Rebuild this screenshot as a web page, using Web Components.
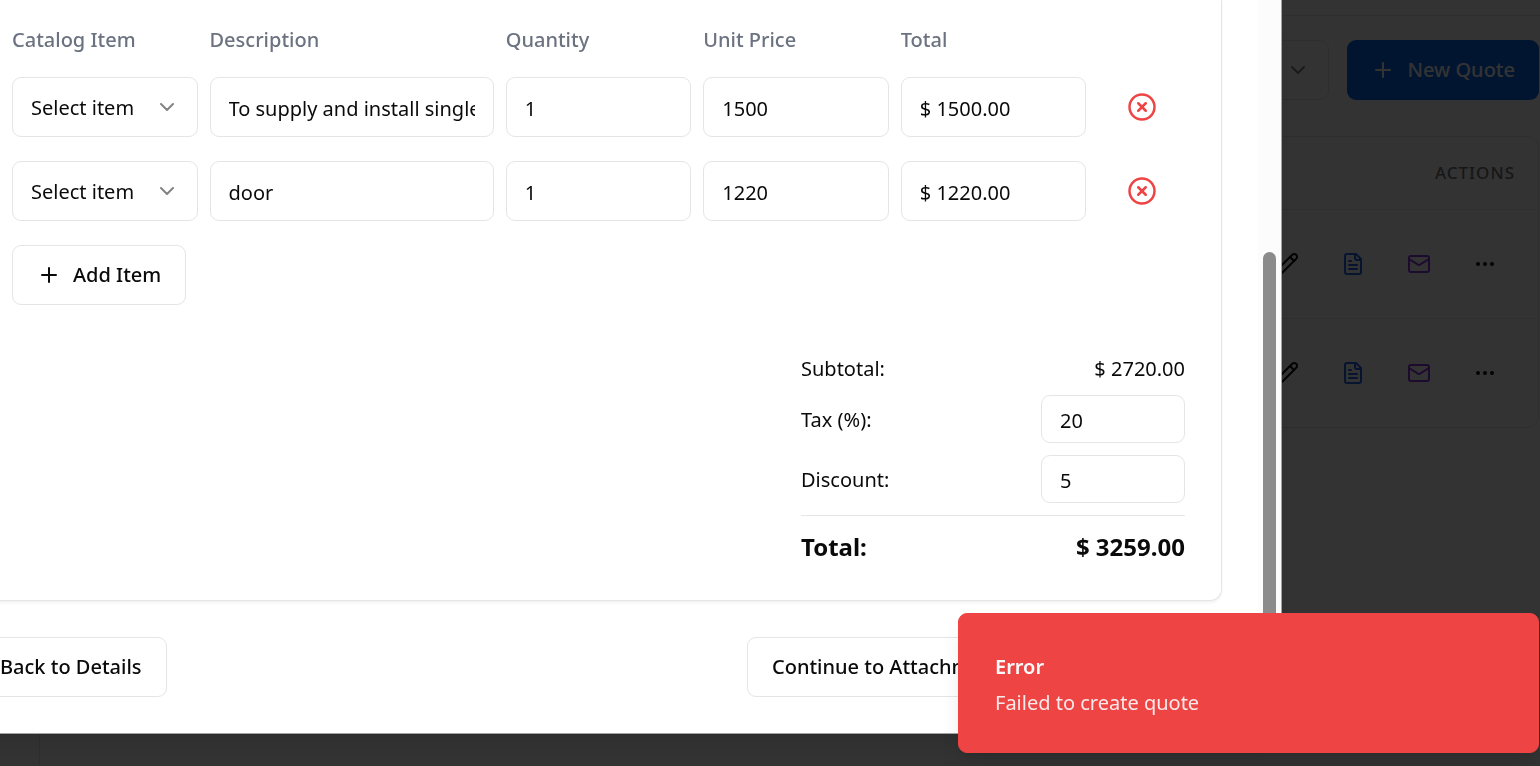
<!DOCTYPE html>
<html lang="en">
<head>
<meta charset="utf-8">
<meta name="viewport" content="width=device-width, initial-scale=1">
<title>Quotes</title>
<style>
  html, body { margin: 0; height: 100%; overflow: hidden; }
  body {
    --line: #e5e5e5;
    --ink: #0a0a0a;
    --muted: #6b7280;
    background: #fcfcfc;
    color: var(--ink);
    font: 400 20px/30px "Noto Sans", "Open Sans", sans-serif;
  }
</style>
</head>
<body>
<quotes-page></quotes-page>
<modal-backdrop></modal-backdrop>
<quote-dialog>
  <form-card>
    <line-items></line-items>
    <quote-totals></quote-totals>
  </form-card>
  <dialog-footer slot="footer"></dialog-footer>
</quote-dialog>
<toast-message>
  <span slot="title">Error</span>
  <span slot="description">Failed to create quote</span>
</toast-message>

<script>
const ICONS = {
  plus: '<path d="M5 12h14"/><path d="M12 5v14"/>',
  chevron: '<path d="m6 9 6 6 6-6"/>',
  remove: '<circle cx="12" cy="12" r="10"/><path d="m15 9-6 6"/><path d="m9 9 6 6"/>',
  pencil: '<path d="M17 3a2.85 2.83 0 1 1 4 4L7.5 20.5 2 22l1.5-5.5Z"/><path d="m15 5 4 4"/>',
  file: '<path d="M15 2H6a2 2 0 0 0-2 2v16a2 2 0 0 0 2 2h12a2 2 0 0 0 2-2V7Z"/><path d="M14 2v4a2 2 0 0 0 2 2h4"/><path d="M10 9H8"/><path d="M16 13H8"/><path d="M16 17H8"/>',
  mail: '<rect width="20" height="16" x="2" y="4" rx="2"/><path d="m22 7-8.97 5.7a1.94 1.94 0 0 1-2.06 0L2 7"/>',
  dots: '<circle cx="12" cy="12" r="1"/><circle cx="19" cy="12" r="1"/><circle cx="5" cy="12" r="1"/>'
};

class ShadowElement extends HTMLElement {
  constructor() {
    super();
    this.attachShadow({ mode: 'open' });
  }
  connectedCallback() {
    const t = document.createElement('template');
    t.innerHTML = `<style>*,*::before{box-sizing:border-box}${this.css()}</style>${this.html()}`;
    this.shadowRoot.replaceChildren(t.content.cloneNode(true));
  }
  css() { return ''; }
  html() { return '<slot></slot>'; }
}

class UiIcon extends ShadowElement {
  css() {
    return `:host{display:block;width:24px;height:24px;flex:none}
      :host([size="lg"]){width:30px;height:30px}
      svg{display:block;width:100%;height:100%}`;
  }
  html() {
    return `<svg viewBox="0 0 24 24" fill="none" stroke="currentColor" stroke-width="2" stroke-linecap="round" stroke-linejoin="round" aria-hidden="true">${ICONS[this.getAttribute('name')]}</svg>`;
  }
}

class UiButton extends ShadowElement {
  css() {
    return `:host{display:block}
      button{display:flex;align-items:center;justify-content:center;gap:12px;width:100%;height:60px;margin:0;padding:0 24px;
        border:1px solid var(--line);border-radius:9px;background:#fff;color:inherit;font:inherit;font-weight:500;white-space:nowrap}
      :host([variant="primary"]) button{border:0;background:#0769f5;color:#fff}
      :host([variant="ghost"]) button{padding:0;border:0;background:none}`;
  }
  html() {
    const label = this.getAttribute('label');
    return `<button type="button"${label ? ` aria-label="${label}"` : ''}><slot></slot></button>`;
  }
}

class QuotesPage extends ShadowElement {
  css() {
    return `:host{display:grid;grid-template-columns:40px 1fr;min-height:100vh}
      aside{border-right:1px solid var(--line)}
      header{height:16px;border-bottom:1px solid var(--line)}
      main{display:grid;gap:36px;padding:24px 1px 24px 36px}
      .toolbar{display:flex;justify-content:flex-end;gap:18px}
      .filter{display:grid;align-items:center;width:270px}
      .filter > *{grid-area:1/1}
      select{appearance:none;width:100%;height:60px;padding:0 18px;border:1px solid var(--line);border-radius:9px;background:#fff;color:inherit;font:inherit}
      .filter ui-icon{justify-self:end;margin-right:19px;opacity:.5;pointer-events:none}`;
  }
  html() {
    return `<aside></aside>
      <div>
        <header></header>
        <main>
          <div class="toolbar">
            <div class="filter"><select aria-label="Status filter"></select><ui-icon name="chevron"></ui-icon></div>
            <ui-button variant="primary"><ui-icon name="plus"></ui-icon>New Quote</ui-button>
          </div>
          <quotes-table></quotes-table>
        </main>
      </div>`;
  }
}

class QuotesTable extends ShadowElement {
  css() {
    return `:host{display:block;border:1px solid var(--line);border-radius:12px;background:#fff;overflow:hidden}
      table{width:100%;border-collapse:collapse}
      th{height:72px;padding:0 23px;border-bottom:1px solid var(--line);color:#737373;font-size:17px;font-weight:500;letter-spacing:1px;text-align:right}
      td{height:109px;padding:0 23px;border-bottom:1px solid var(--line)}
      tr:last-child td{border-bottom:0}
      .actions{display:flex;justify-content:flex-end;gap:6px}
      ui-button{width:60px}
      .pdf{color:#2563eb}
      .mail{color:#9333ea}`;
  }
  html() {
    const row = `<tr><td><div class="actions">
      <ui-button variant="ghost" label="Edit"><ui-icon name="pencil"></ui-icon></ui-button>
      <ui-button variant="ghost" label="PDF" class="pdf"><ui-icon name="file"></ui-icon></ui-button>
      <ui-button variant="ghost" label="Email" class="mail"><ui-icon name="mail"></ui-icon></ui-button>
      <ui-button variant="ghost" label="More"><ui-icon name="dots"></ui-icon></ui-button>
    </div></td></tr>`;
    return `<table><thead><tr><th scope="col">ACTIONS</th></tr></thead><tbody>${row}${row}</tbody></table>`;
  }
}

class ModalBackdrop extends ShadowElement {
  css() { return ':host{position:fixed;inset:0;background:rgba(0,0,0,.8)}'; }
}

/* The dialog runs past the left and top window edges, scrolled to its end. */
class QuoteDialog extends ShadowElement {
  css() {
    return `:host{position:fixed;top:-1px;left:-62px;right:258px;display:flex;border:1px solid #a3a3a3;background:#fff;
        box-shadow:0 15px 23px -5px rgba(0,0,0,.1),0 6px 9px -6px rgba(0,0,0,.1)}
      .content{flex:1;display:grid;gap:36px;padding:0 36px 36px}
      .track{display:flex;justify-content:center;width:23px;padding-top:252px;background:#fcfcfc}
      .thumb{width:13px;border-radius:7px;background:#8b8b8b}`;
  }
  html() {
    return `<div class="content"><slot></slot><slot name="footer"></slot></div>
      <div class="track"><div class="thumb"></div></div>`;
  }
}

class FormCard extends ShadowElement {
  css() {
    return `:host{display:grid;gap:48px;padding:27px 36px 36px;border:1px solid var(--line);border-top:0;border-radius:0 0 12px 12px;
        background:#fff;box-shadow:0 2px 3px rgba(0,0,0,.05)}`;
  }
}

class LineItems extends ShadowElement {
  css() {
    return `:host{display:grid;gap:24px}
      .row{display:grid;grid-template-columns:repeat(12,1fr);gap:12px;align-items:center}
      .row > *{grid-column:span 2;min-width:0}
      .row > .wide{grid-column:span 3}
      .row > .slim{grid-column:span 1}
      .head{color:var(--muted);font-weight:500;line-height:26px}
      input,select{width:100%;height:60px;margin:0;padding:2px 18px 0;border:1px solid var(--line);border-radius:9px;background:#fff;color:inherit;font:inherit}
      select{appearance:none}
      .pick{display:grid;align-items:center}
      .pick > *{grid-area:1/1}
      .pick ui-icon{justify-self:end;margin-right:19px;opacity:.5;pointer-events:none}
      .remove{color:#ef4444}
      .add{justify-self:start}`;
  }
  html() {
    const items = [
      ['To supply and install single door', '1', '1500', '$ 1500.00'],
      ['door', '1', '1220', '$ 1220.00']
    ];
    const row = ([text, qty, price, total], i) => `<div class="row">
      <div class="pick"><select id="item${i}" aria-label="Catalog Item"><option>Select item</option></select><ui-icon name="chevron"></ui-icon></div>
      <input class="wide" id="text${i}" aria-label="Description" value="${text}">
      <input id="qty${i}" aria-label="Quantity" inputmode="numeric" value="${qty}">
      <input id="price${i}" aria-label="Unit Price" inputmode="decimal" value="${price}">
      <input id="total${i}" aria-label="Total" readonly value="${total}">
      <ui-button class="slim remove" variant="ghost" label="Remove item"><ui-icon name="remove" size="lg"></ui-icon></ui-button>
    </div>`;
    return `<div class="row head">
        <label for="item0">Catalog Item</label><label class="wide" for="text0">Description</label>
        <label for="qty0">Quantity</label><label for="price0">Unit Price</label><label for="total0">Total</label>
      </div>
      ${items.map(row).join('')}
      <ui-button class="add"><ui-icon name="plus"></ui-icon>Add Item</ui-button>`;
  }
}

class QuoteTotals extends ShadowElement {
  css() {
    return `:host{display:grid;gap:12px;justify-self:end;width:384px}
      div{display:flex;justify-content:space-between;align-items:center}
      span,label{padding-top:2px;line-height:28px}
      input{width:144px;height:48px;margin:0;padding:2px 18px 0;border:1px solid var(--line);border-radius:9px;background:#fff;color:inherit;font:inherit}
      .total{padding-top:12px;border-top:1px solid var(--line);font-size:24px;font-weight:700}
      .total span{line-height:34px}`;
  }
  html() {
    return `<div><span>Subtotal:</span><span>$ 2720.00</span></div>
      <div><label for="tax">Tax (%):</label><input id="tax" inputmode="decimal" value="20"></div>
      <div><label for="discount">Discount:</label><input id="discount" inputmode="decimal" value="5"></div>
      <div class="total"><span>Total:</span><span>$ 3259.00</span></div>`;
  }
}

class DialogFooter extends ShadowElement {
  css() {
    return `:host{display:flex;justify-content:space-between}
      .next{display:flex;gap:12px;width:475px}
      .save{flex:1}`;
  }
  html() {
    return `<ui-button>Back to Details</ui-button>
      <div class="next"><ui-button>Continue to Attachments</ui-button><ui-button class="save" variant="primary" label="Save"></ui-button></div>`;
  }
}

class ToastMessage extends ShadowElement {
  css() {
    return `:host{position:fixed;right:1px;bottom:13px;display:grid;align-content:center;gap:6px;box-sizing:border-box;width:581px;height:140px;
        padding:4px 36px 0;border:1px solid #ef4444;border-radius:9px;background:#ef4444;color:#fafafa;
        box-shadow:0 15px 23px -5px rgba(0,0,0,.1),0 6px 9px -6px rgba(0,0,0,.1)}
      .title{font-weight:600}
      .description{opacity:.9}`;
  }
  html() {
    return `<div class="title" role="alert"><slot name="title"></slot></div>
      <div class="description"><slot name="description"></slot></div>`;
  }
}

[['ui-icon', UiIcon], ['ui-button', UiButton], ['quotes-page', QuotesPage], ['quotes-table', QuotesTable],
 ['modal-backdrop', ModalBackdrop], ['quote-dialog', QuoteDialog], ['form-card', FormCard], ['line-items', LineItems],
 ['quote-totals', QuoteTotals], ['dialog-footer', DialogFooter], ['toast-message', ToastMessage]
].forEach(([name, cls]) => customElements.define(name, cls));
</script>
</body>
</html>
